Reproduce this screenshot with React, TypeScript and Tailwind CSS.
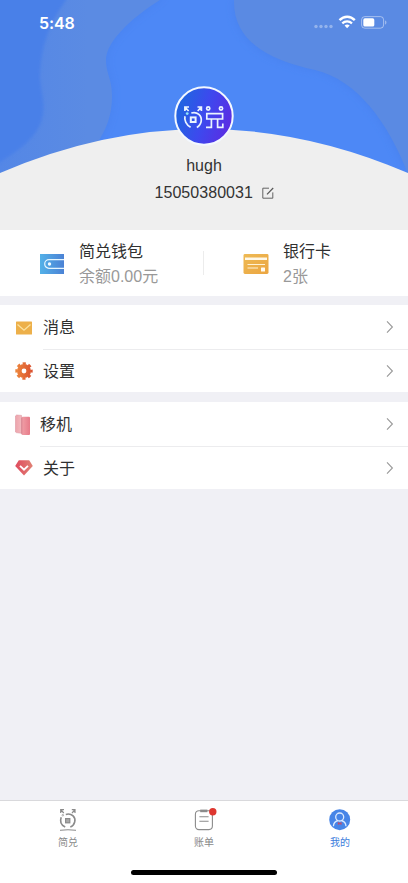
import type { ReactNode } from "react";

function HeaderWaves() {
  return (
    <svg className="absolute inset-0 h-full w-full" viewBox="0 0 408 230" fill="none">
      <defs>
        <linearGradient id="leftWave" x1="0" y1="0" x2="1" y2="0">
          <stop offset="0" stopColor="#5487e6" />
          <stop offset="0.55" stopColor="#5b8be3" />
        </linearGradient>
        <filter id="soft" x="-20%" y="-20%" width="140%" height="140%">
          <feGaussianBlur stdDeviation="5" />
        </filter>
        <filter id="edge" x="-20%" y="-20%" width="140%" height="140%">
          <feGaussianBlur stdDeviation="1.8" />
        </filter>
      </defs>
      <rect width="408" height="230" fill="#4d88f6" />
      <path d="M-20-20H170L160 0C128 20 106 43 106 60C106 74 112 78 112 96C112 116 106 130 96 145L-20 190Z" fill="#3f76dd" opacity=".3" filter="url(#soft)" />
      <path d="M0 0H160C128 20 106 43 106 60C106 74 112 78 112 96C112 116 106 130 96 145L0 180Z" fill="url(#leftWave)" />
      <path d="M-10-10H70L66 0C48 25 40 50 40 78C41 92 45 101 43 114C40 136 20 151-10 168Z" fill="#4a80e8" filter="url(#edge)" />
      <path d="M235 0C232 42 270 60 318 70C360 82 389 125 408 174V0Z" fill="#3f76dd" opacity=".38" filter="url(#soft)" />
      <path d="M234 0C233 42 270 60 315 70C357 80 388 122 408 174V0Z" fill="#5a8ae3" />
      <path d="M0 173Q204 85 408 173V230H0Z" fill="#efefef" />
    </svg>
  );
}

function StatusBar() {
  return (
    <div className="relative flex h-[44px] items-start justify-between pl-[39px] pr-[21px] text-white">
      <span className="mt-[12px] text-[16px] font-semibold leading-[22px] tracking-[-0.1px]">5:48</span>
      <svg className="mt-[14px]" width="74" height="18" viewBox="0 0 74 18" fill="none">
        <g fill="#fff" opacity=".35">
          <circle cx="3" cy="12.5" r="1.7" />
          <circle cx="8" cy="12.5" r="1.7" />
          <circle cx="13" cy="12.5" r="1.7" />
          <circle cx="18" cy="12.5" r="1.7" />
        </g>
        <path d="M26.5 6.2C31 1.6 37.4 1.6 41.8 6.2" stroke="#fff" strokeWidth="2.4" />
        <path d="M29.3 9.4C32 6.7 36.2 6.7 39 9.4" stroke="#fff" strokeWidth="2.2" />
        <path d="M31.6 11.6C33 10.2 35.2 10.2 36.7 11.6L34.1 14.2Z" fill="#fff" />
        <rect x="48.6" y="2.6" width="22" height="11.6" rx="3.2" stroke="#fff" strokeOpacity=".45" />
        <rect x="50.3" y="4.3" width="11" height="8.2" rx="1.6" fill="#fff" />
        <path d="M72.2 6.5C73.8 7 73.8 10 72.2 10.4Z" fill="#fff" fillOpacity=".5" />
      </svg>
    </div>
  );
}

function Avatar() {
  return (
    <svg width="60" height="60" viewBox="0 0 60 60" fill="none">
      <defs>
        <linearGradient id="avatarFill" x1="0" y1=".35" x2="1" y2=".65">
          <stop offset=".1" stopColor="#2462e2" />
          <stop offset=".5" stopColor="#3d49ee" />
          <stop offset="1" stopColor="#5d2be2" />
        </linearGradient>
      </defs>
      <circle cx="30" cy="30" r="28.7" fill="url(#avatarFill)" stroke="#f3f8ff" strokeWidth="2" />
      <g stroke="#eaf4ff" strokeWidth="1.7">
        <path d="M10.9 25V21H15M11 21.2L14.6 25M23.5 21H27.4V25M27.2 21.2L23.7 25" />
        <path d="M11 30.2C10 34.2 12.3 38.9 16.6 41.2M17.3 27C23.5 25.3 28 29.7 27.2 35.2C26.8 38 25.2 40.2 22.8 41.4" />
        <rect x="16.8" y="31.4" width="4.8" height="4.6" strokeWidth="2" />
        <circle cx="34.2" cy="22.5" r="1.6" />
        <circle cx="47" cy="22.5" r="1.6" />
        <path d="M32.8 27.6H48.6V33H32.8ZM37.4 33V41.4H32M43.6 33V41.4H48.8V37.6" />
      </g>
      <circle cx="13.2" cy="27.6" r="1.4" fill="#8fe4f7" />
    </svg>
  );
}

function EditIcon() {
  return (
    <svg width="12" height="12" viewBox="0 0 12 12" fill="none" stroke="#555" strokeWidth=".9">
      <path d="M7 1.2H.8V11.2H10.8V5.4" />
      <path d="M5 7.4L11.2 1" strokeWidth="1.2" />
    </svg>
  );
}

function WalletIcon() {
  return (
    <svg width="26" height="22" viewBox="0 0 26 22" fill="none">
      <defs>
        <linearGradient id="wallet">
          <stop stopColor="#53b1e8" />
          <stop offset="1" stopColor="#4b82d5" />
        </linearGradient>
      </defs>
      <path d="M1 1H25V21H1Z" fill="url(#wallet)" />
      <path d="M25 6.7H10A4.3 4.3 0 0 0 10 15.3H25" stroke="#e4f6ff" strokeWidth="1.2" />
      <circle cx="10.5" cy="11" r="1.7" fill="#f3fbff" />
    </svg>
  );
}

function CardIcon() {
  return (
    <svg width="26" height="22" viewBox="0 0 26 22" fill="none">
      <defs>
        <linearGradient id="card" x1="0" y1="0" x2="1" y2="1">
          <stop stopColor="#eeba54" />
          <stop offset="1" stopColor="#eba541" />
        </linearGradient>
      </defs>
      <rect x=".5" y="1" width="25" height="20" rx="1.4" fill="url(#card)" />
      <path d="M2 4.5H24V7H2Z" fill="#fff8e8" />
      <path d="M4.5 11.5H22M4.5 15H15" stroke="#fff2d5" strokeWidth="1" />
      <rect x="18" y="14.5" width="4" height="4" rx=".5" fill="#fffaf0" />
    </svg>
  );
}

function MailIcon() {
  return (
    <svg width="18" height="18" viewBox="0 0 18 18" fill="none">
      <rect x="1" y="2.5" width="16" height="13" rx=".6" fill="#edb04a" />
      <path d="M2.5 5.5L9 11.2L15.5 5.5" stroke="#fbe2a0" strokeWidth="1.3" />
    </svg>
  );
}

function GearIcon() {
  return (
    <svg width="18" height="18" viewBox="0 0 18 18" fill="none">
      <defs>
        <linearGradient id="gear" gradientUnits="userSpaceOnUse" x1="0" y1="0" x2="18" y2="0">
          <stop stopColor="#ee8a3e" />
          <stop offset="1" stopColor="#d94f2f" />
        </linearGradient>
      </defs>
      <circle cx="9" cy="9" r="4.7" stroke="url(#gear)" strokeWidth="4.6" />
      <circle cx="9" cy="9" r="7.5" stroke="url(#gear)" strokeWidth="2.4" strokeDasharray="3.2 2.69" strokeDashoffset="1.6" />
    </svg>
  );
}

function PhonesIcon() {
  return (
    <svg width="16" height="22" viewBox="0 0 16 22" fill="none">
      <defs>
        <linearGradient id="backPhone">
          <stop stopColor="#eda4ac" />
          <stop offset="1" stopColor="#f2b9be" />
        </linearGradient>
        <linearGradient id="frontPhone">
          <stop stopColor="#f0a0a8" />
          <stop offset="1" stopColor="#e77b89" />
        </linearGradient>
      </defs>
      <path d="M.5 1.9L1.6 1L6.5 1.4V19.3L1.2 18.6L.5 18Z" fill="url(#backPhone)" stroke="#d98b96" strokeWidth=".5" />
      <rect x="6.6" y="2.8" width="8.4" height="18.2" rx="1" fill="url(#frontPhone)" />
      <path d="M6.8 3.6V20.2" stroke="#cb707e" strokeWidth=".7" />
    </svg>
  );
}

function GemIcon() {
  return (
    <svg width="18" height="18" viewBox="0 0 18 18" fill="none">
      <defs>
        <linearGradient id="gem">
          <stop stopColor="#df4a5d" />
          <stop offset="1" stopColor="#e08275" />
        </linearGradient>
      </defs>
      <path d="M3.8 1.2H14.2L17.8 7L9 16.4L.2 7Z" fill="url(#gem)" />
      <path d="M5 6.9L9 10.6L13 6.9" stroke="#fff" strokeWidth="1.9" />
    </svg>
  );
}

function Chevron() {
  return (
    <svg width="8" height="14" viewBox="0 0 8 14" fill="none" stroke="#999" strokeWidth="1.1">
      <path d="M1 1.4L6.4 7L1 12.6" />
    </svg>
  );
}

function HomeTabIcon() {
  return (
    <svg width="22" height="24" viewBox="0 0 22 24" fill="none" stroke="#8b8b8b">
      <path d="M3.7 5V1.7H7M4 2L6.8 5M14.8 1.7H18V5M17.8 2L15 5" strokeWidth="1.2" />
      <path d="M4.2 9.2C2.7 13.5 4 17 8.2 18.9M8.8 6.4C15 4.8 19 9.5 17.7 14C17 16.5 15.5 18.2 13.3 19" strokeWidth="1.6" />
      <rect x="8.6" y="10.6" width="4.2" height="4.2" fill="#aaa" strokeWidth="1.2" />
      <circle cx="5.8" cy="7.2" r=".8" strokeWidth=".7" />
      <path d="M3 22.3Q11 21.2 19 22.3" strokeWidth="1" />
    </svg>
  );
}

function BillTabIcon() {
  return (
    <svg className="overflow-visible" width="22" height="24" viewBox="0 0 22 24" fill="none" stroke="#8b8b8b">
      <rect x="2.4" y="2.7" width="17" height="18.9" rx="3.5" strokeWidth="1.1" />
      <path d="M7.2 2.9H14.4" strokeWidth="2.6" />
      <path d="M6.4 8.8H15.6M6.4 13.3H15.6" strokeWidth="1.1" />
      <circle cx="19.8" cy="3.8" r="3.7" fill="#de3730" stroke="none" />
    </svg>
  );
}

function ProfileTabIcon() {
  return (
    <svg width="22" height="24" viewBox="0 0 22 24" fill="none">
      <circle cx="10.7" cy="11.7" r="10.5" fill="#4785e7" />
      <g stroke="#dceaff" strokeWidth="1.3">
        <circle cx="10.7" cy="9" r="4" />
        <path d="M4.4 18.2C4.6 15 6.4 13.2 8.9 12.5M12.5 12.5C15 13.2 16.8 15 17 18.2" />
      </g>
      <path d="M8.9 14L10.7 14.9L12.5 14V17L10.7 16.1L8.9 17Z" fill="#c94a68" />
    </svg>
  );
}

function Account({ icon, title, detail }: { icon: ReactNode; title: string; detail: string }) {
  return (
    <div className="flex h-full flex-1 items-center pl-[39px]">
      <div className="mt-[2px] w-[40px]">{icon}</div>
      <div className="mt-[2px] whitespace-nowrap text-[16px] leading-[25px]">
        <div className="text-[#303030]">{title}</div>
        <div className="text-[#999]">{detail}</div>
      </div>
    </div>
  );
}

function MenuRow({ icon, label, divider = false, narrow = false }: { icon: ReactNode; label: string; divider?: boolean; narrow?: boolean }) {
  return (
    <div className={`flex pl-[15px] ${divider ? "h-[45px]" : "h-[42px]"}`}>
      <div className={narrow ? "flex w-[25px] items-center" : "flex w-[28px] items-center"}>{icon}</div>
      <div className={`flex flex-1 items-center justify-between pr-[14px] ${divider ? "border-b border-[#ececee]" : ""}`}>
        <span className="pt-[1px] text-[16px] leading-[24px] text-[#303030]">{label}</span>
        <Chevron />
      </div>
    </div>
  );
}

function Tab({ icon, label, active = false }: { icon: ReactNode; label: string; active?: boolean }) {
  return (
    <div className="flex flex-1 flex-col items-center pt-[7px]">
      {icon}
      <span className={`mt-[3px] text-[10px] leading-[15px] ${active ? "text-[#3d7ddc]" : "text-[#888]"}`}>{label}</span>
    </div>
  );
}

export default function App() {
  return (
    <div className="flex h-[883px] w-[408px] flex-col overflow-hidden bg-[#f0f0f5] font-['Liberation_Sans','Noto_Sans_CJK_SC',sans-serif]">
      <header className="relative h-[230px] shrink-0">
        <HeaderWaves />
        <div className="relative flex flex-col">
          <div className="font-['Inter',sans-serif]"><StatusBar /></div>
          <div className="mt-[42px] flex flex-col items-center">
            <Avatar />
            <div className="mt-[9px] text-[16px] leading-[22px] text-[#333]">hugh</div>
            <div className="mt-[5px] flex items-center gap-[8px] pl-[20px] text-[16px] leading-[22px] text-[#333]">
              <span className="w-[99px] tracking-[0.05px]">15050380031</span>
              <EditIcon />
            </div>
          </div>
        </div>
      </header>
      <section className="flex h-[66px] shrink-0 items-center bg-white">
        <Account icon={<WalletIcon />} title="简兑钱包" detail="余额0.00元" />
        <div className="-ml-px h-[24px] w-px bg-[#ececec]" />
        <Account icon={<CardIcon />} title="银行卡" detail="2张" />
      </section>
      <section className="mt-[9px] shrink-0 bg-white">
        <MenuRow icon={<MailIcon />} label="消息" divider />
        <MenuRow icon={<GearIcon />} label="设置" />
      </section>
      <section className="mt-[10px] shrink-0 bg-white">
        <MenuRow icon={<PhonesIcon />} label="移机" divider narrow />
        <MenuRow icon={<GemIcon />} label="关于" />
      </section>
      <div className="flex-1" />
      <footer className="flex h-[83px] shrink-0 flex-col border-t border-[#d9d9dc] bg-white">
        <nav className="flex h-[69px]">
          <Tab icon={<HomeTabIcon />} label="简兑" />
          <Tab icon={<BillTabIcon />} label="账单" />
          <Tab icon={<ProfileTabIcon />} label="我的" active />
        </nav>
        <div className="mx-auto h-[5px] w-[146px] rounded-full bg-black" />
      </footer>
    </div>
  );
}
